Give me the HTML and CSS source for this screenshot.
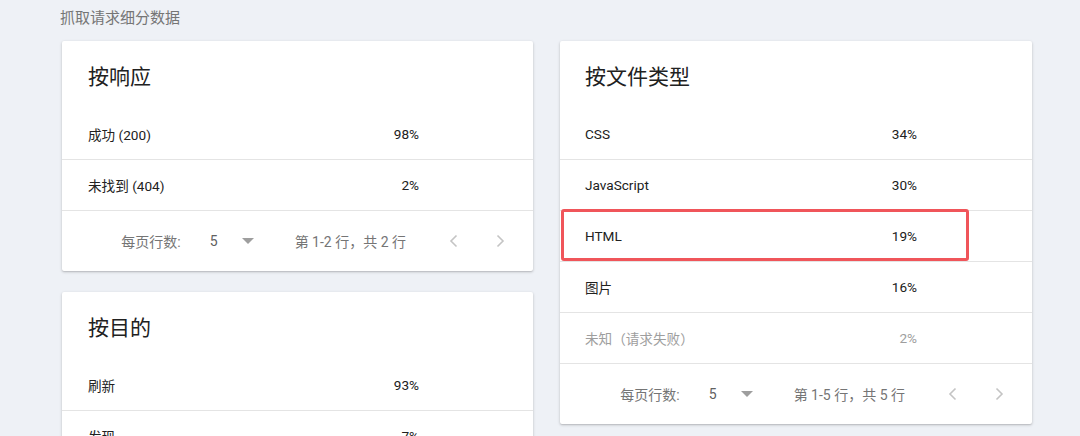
FILE: index.html
```html
<!DOCTYPE html>
<html lang="zh">
<head>
<meta charset="utf-8">
<title>抓取请求细分数据</title>
<link rel="stylesheet" href="styles.css">
</head>
<body>
<div class="page">
  <div class="page-title">抓取请求细分数据</div>
  <div class="grid">
    <div class="col">
      <section class="card">
        <h2 class="card-title">按响应</h2>
        <div class="row"><span>成功 (200)</span><span class="pct">98%</span></div>
        <div class="row"><span>未找到 (404)</span><span class="pct">2%</span></div>
        <div class="footer">
          <span class="rpp">每页行数:</span>
          <span class="sel">5</span>
          <svg class="caret" width="12" height="6" viewBox="0 0 12 6"><path d="M0 0h12L6 6z" fill="#9e9e9e"/></svg>
          <span class="range">第 1-2 行，共 2 行</span>
          <span class="nav"><svg width="9" height="14" viewBox="0 0 9 14"><path d="M7.5 1.5L2 7l5.5 5.5" fill="none" stroke="#c4c4c4" stroke-width="1.6"/></svg></span>
          <span class="nav"><svg width="9" height="14" viewBox="0 0 9 14"><path d="M1.5 1.5L7 7l-5.5 5.5" fill="none" stroke="#c4c4c4" stroke-width="1.6"/></svg></span>
        </div>
      </section>
      <section class="card">
        <h2 class="card-title">按目的</h2>
        <div class="row"><span>刷新</span><span class="pct">93%</span></div>
        <div class="row"><span>发现</span><span class="pct">7%</span></div>
      </section>
    </div>
    <div class="col">
      <section class="card">
        <h2 class="card-title">按文件类型</h2>
        <div class="row"><span>CSS</span><span class="pct">34%</span></div>
        <div class="row"><span>JavaScript</span><span class="pct">30%</span></div>
        <div class="row highlighted"><span>HTML</span><span class="pct">19%</span><span class="mark"></span></div>
        <div class="row"><span>图片</span><span class="pct">16%</span></div>
        <div class="row muted"><span>未知（请求失败）</span><span class="pct">2%</span></div>
        <div class="footer">
          <span class="rpp">每页行数:</span>
          <span class="sel">5</span>
          <svg class="caret" width="12" height="6" viewBox="0 0 12 6"><path d="M0 0h12L6 6z" fill="#9e9e9e"/></svg>
          <span class="range">第 1-5 行，共 5 行</span>
          <span class="nav"><svg width="9" height="14" viewBox="0 0 9 14"><path d="M7.5 1.5L2 7l5.5 5.5" fill="none" stroke="#c4c4c4" stroke-width="1.6"/></svg></span>
          <span class="nav"><svg width="9" height="14" viewBox="0 0 9 14"><path d="M1.5 1.5L7 7l-5.5 5.5" fill="none" stroke="#c4c4c4" stroke-width="1.6"/></svg></span>
        </div>
      </section>
    </div>
  </div>
</div>
</body>
</html>
```
FILE: styles.css
```css
html, body {
  margin: 0;
  padding: 0;
  background: #eef1f6;
  font-family: Roboto, "Noto Sans CJK SC", sans-serif;
  color: #212121;
  overflow: hidden;
}
.page {
  padding: 8px 0 0 60px;
}
.page-title {
  font-size: 15px;
  line-height: 20px;
  color: #757575;
  margin-bottom: 13px;
}
.grid {
  display: grid;
  grid-template-columns: 471px 472px;
  column-gap: 27px;
  padding-left: 2px;
  align-items: start;
}
.col {
  display: flex;
  flex-direction: column;
  gap: 21px;
}
.card {
  background: #fff;
  border-radius: 2px;
  box-shadow: 0 1px 3px rgba(0, 0, 0, 0.22), 0 1px 1px rgba(0, 0, 0, 0.06);
}
.card-title {
  margin: 0;
  height: 68px;
  display: flex;
  align-items: center;
  padding-left: 26px;
  font-size: 21px;
  font-weight: 400;
  color: #212121;
}
.col:last-child .card-title { padding-left: 25px; }
.row {
  position: relative;
  display: flex;
  align-items: center;
  justify-content: space-between;
  height: 50px;
  border-bottom: 1px solid #e4e4e4;
  padding: 0 114px 0 26px;
  font-size: 13.6px;
  color: #212121;
}
.col:last-child .row { padding-left: 25px; padding-right: 115px; }
.row.muted { color: #9e9e9e; }
.mark {
  position: absolute;
  left: 1px;
  top: -2px;
  width: 402px;
  height: 46px;
  border: 3px solid #f0555a;
  border-radius: 3px;
  pointer-events: none;
}
.footer {
  height: 60px;
  display: flex;
  align-items: center;
  justify-content: flex-end;
  padding-right: 21px;
  font-size: 14px;
  color: #757575;
}
.rpp { margin-right: 29px; }
.sel { color: #616161; margin-right: 24px; }
.caret { margin-right: 41px; }
.range { margin-right: 35px; }
.nav {
  width: 24px;
  height: 24px;
  display: flex;
  align-items: center;
  justify-content: center;
}
.nav + .nav { margin-left: 23px; }
```
